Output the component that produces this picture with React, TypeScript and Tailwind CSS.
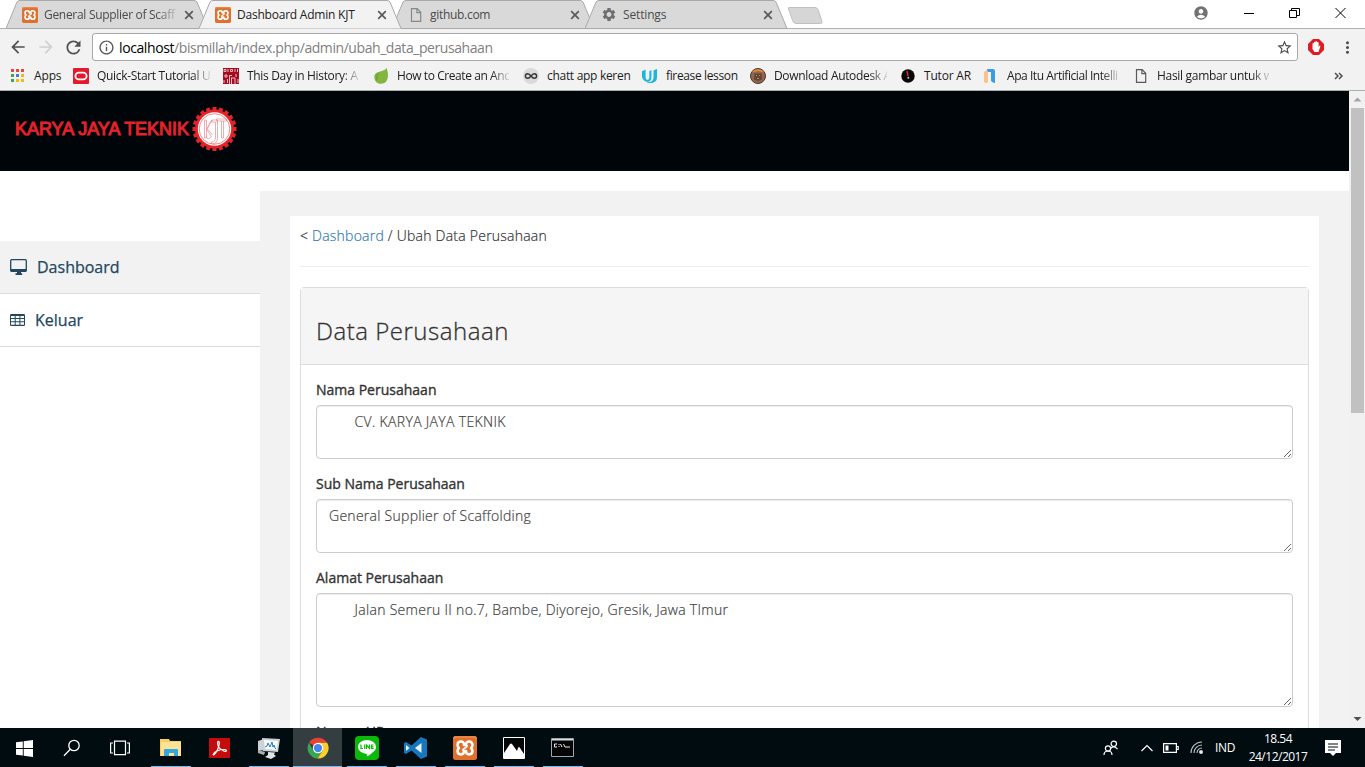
import React from "react";
import { MdSettings, MdAccountCircle, MdStarBorder, MdMoreVert, MdArrowBack, MdArrowForward, MdRefresh, MdInfoOutline } from "react-icons/md";

function XamppIcon({ size = 16 }: { size?: number }) {
  return (
    <svg width={size} height={size} viewBox="0 0 24 24" className="shrink-0">
      <rect width="24" height="24" rx="2.5" fill="#e0702c" />
      <path d="M1 3V1h22v2" fill="none" stroke="#f19a5e" strokeWidth="1" />
      <path d="M8 5.600C5.500 5.600 4.500 7.300 4.500 9c0 1.300.6 2.300 1.500 3-.9.7-1.500 1.700-1.500 3 0 1.700 1 3.400 3.500 3.400 2.200 0 3-1.400 3-3.400h2c0 2 .8 3.400 3 3.400 2.500 0 3.500-1.700 3.500-3.400 0-1.300-.6-2.300-1.500-3 .9-.7 1.500-1.700 1.500-3 0-1.700-1-3.400-3.500-3.400-2.200 0-3 1.400-3 3.400h-2c0-2-.8-3.400-3-3.400Z" fill="none" stroke="#fff" strokeWidth="2.500" strokeLinejoin="round" />
      <path d="M14 9v1.500L10 13.500V15" fill="none" stroke="#fff" strokeWidth="1.600" />
    </svg>
  );
}

function PageIcon({ color = "#5a5a5a" }: { color?: string }) {
  return (
    <svg width="16" height="16" viewBox="0 0 16 16" className="shrink-0" fill="none" stroke={color} strokeWidth="1.2">
      <path d="M3.500 1.600h5.700l3.500 3.700v9.100H3.500zM8.900 1.600v4h3.800" />
    </svg>
  );
}

function LineIcon() {
  return (
    <svg width="24" height="24" viewBox="0 0 24 24">
      <rect width="24" height="24" rx="4" fill="#08b908" />
      <path d="M12 4c5 0 9 3 9 7 0 3-2 4.500-4 6-2 1.600-4.500 3.500-5 3.300-.6-.2.500-2.300-.5-2.500C6.500 17.200 3 14.500 3 11c0-4 4-7 9-7Z" fill="#fff" />
      <path d="M6 8.500v4h2M9.700 8.500v4.500M11.500 13V9l3 3.500v-4M18.500 9h-2v3.500h2M16.500 10.800h2" fill="none" stroke="#08b908" strokeWidth="1.200" />
    </svg>
  );
}

type TabProps = { title: string; icon: React.ReactNode; active?: boolean; titleClass: string };

function Tab({ title, icon, active, titleClass }: TabProps) {
  return (
    <div className={active ? "relative z-10 -mr-[13px] h-[29px] w-[206px] shrink-0" : "relative -mr-[13px] h-[29px] w-[206px] shrink-0"}>
      <svg className="absolute inset-0" width="206" height="29" viewBox="0 0 206 29">
        <path d="M0 28.500 11 2Q12 .5 14 .5H188Q190 .5 191 2L202 28.500" fill={active ? "#f2f2f2" : "#d9d9d9"} stroke="#a9a9a9" />
        {!active && <path d="M0 28.500H203" stroke="#a9a9a9" />}
      </svg>
      <div className="relative flex h-[29px] items-center pl-4">
        <span className="flex w-4 shrink-0">{icon}</span>
        <span className={"ml-1.5 w-[133px] whitespace-nowrap text-[12px] " + titleClass}>{title}</span>
        <svg width="10" height="10" viewBox="0 0 10 10" className="ml-[7px] shrink-0"><path d="m1.200 1.200 7.600 7.600m0-7.600L1.200 8.800" stroke="#5a5a5a" strokeWidth="1.700" /></svg>
      </div>
    </div>
  );
}

const fade = "[mask-image:linear-gradient(to_right,black_84%,rgba(0,0,0,0.15))]";

function Bookmark({ icon, text, className, textClass = "" }: { icon: React.ReactNode; text: string; className: string; textClass?: string }) {
  return (
    <div className={"flex shrink-0 items-center " + className}>
      <span className="mr-2 flex w-4 shrink-0">{icon}</span>
      <span className={"whitespace-nowrap " + textClass}>{text}</span>
    </div>
  );
}

function AppsIcon() {
  const c = ["#e04a3f", "#e04a3f", "#e04a3f", "#3aa757", "#3f7de0", "#f2b90f", "#3aa757", "#f2b90f", "#f2b90f"];
  return <svg width="14" height="14" viewBox="0 0 14 14" className="ml-px">{c.map((f, i) => <rect key={i} x={(i % 3) * 5} y={Math.floor(i / 3) * 5} width="3" height="3" fill={f} />)}</svg>;
}

function Bookmarks() {
  return (
    <div className="flex h-[28px] items-center pl-[10px] text-[12px] text-[#1c1c1c]">
      <Bookmark className="w-[63px]" text="Apps" textClass="tracking-[-0.15px]" icon={<AppsIcon />} />
      <Bookmark className="w-[150px]" text="Quick-Start Tutorial U" textClass={"w-[113px] tracking-[-0.32px] " + fade} icon={
        <svg width="16" height="16" viewBox="0 0 16 16"><rect width="16" height="16" rx="1" fill="#e3192c" /><rect x="2.400" y="4.600" width="11.200" height="6.800" rx="3.400" fill="none" stroke="#fff" strokeWidth="1.800" /></svg>} />
      <Bookmark className="w-[150px]" text="This Day in History: A" textClass={"w-[112px] tracking-[-0.32px] " + fade} icon={
        <svg width="16" height="16" viewBox="0 0 16 16"><rect width="16" height="16" fill="#a30b20" /><path d="M1 1.500h2v2H1zM5 1v3M7.500 1.500h2v2h-2zM12 1v3M14.500 1v3M2 7h2v2H2zM6.500 16V7.500H9M13 6v3M1 12v3M4.500 11v4M8.500 10v6M8 10h4M12 10v6M15 11v4" stroke="#efbcc0" fill="none" /></svg>} />
      <Bookmark className="w-[150px]" text="How to Create an And" textClass={"w-[112px] tracking-[-0.42px] " + fade} icon={
        <svg width="16" height="16" viewBox="0 0 16 16"><path d="M13.500 0C16 6 15.500 13.500 10.700 15.300 5.500 17 1.500 14 1.300 9.500 1.100 5 5 4 9.500 2.800Q12.500 1.900 13.500 0Z" fill="#82b541" /><path d="M4 13.500C1.800 9 4 6 6 4.500 4.500 8 4.500 11 4 13.500" fill="#6da32f" /></svg>} />
      <Bookmark className="w-[119px]" text="chatt app keren" textClass="tracking-[-0.3px]" icon={
        <svg width="16" height="16" viewBox="0 0 16 16"><circle cx="8" cy="8" r="8" fill="#dadada" /><path d="M8 8C6.500 6 5.600 5.700 4.700 5.700a2.300 2.300 0 0 0 0 4.600C5.600 10.300 6.500 10 8 8s2.400-2.300 3.300-2.300a2.300 2.300 0 0 1 0 4.600C10.400 10.300 9.500 10 8 8Z" fill="none" stroke="#333" strokeWidth="1.400" /></svg>} />
      <Bookmark className="w-[108px]" text="firease lesson" textClass="tracking-[-0.36px]" icon={
        <svg width="17" height="16" viewBox="0 0 17 16"><path d="M0 3 3.800 1v8q0 3 2 3t2-3V3L10 1.500V9q0 5-4.200 5T0 9Z" fill="#1cb4d9" /><path d="M12.300 2 16 .5V9q0 6.500-7.500 6.500-3 0-4-1.500 7.800 1.500 7.800-5Z" fill="#1cb4d9" /></svg>} />
      <Bookmark className="w-[150px]" text="Download Autodesk A" textClass={"w-[113px] tracking-[-0.34px] " + fade} icon={
        <svg width="16" height="16" viewBox="0 0 16 16"><circle cx="8" cy="8" r="7.500" fill="#90664e" stroke="#4e382f" /><path d="M2 4.500C4 0 12 0 14 4.500L8 3Z" fill="#e5873c" /><path d="M4.500 5.500h7l.5 6-4 1.500-4-1.500z" fill="#654434" /><path d="M6 7.500h1m2 0h1m-3 3h2" stroke="#b98967" /></svg>} />
      <Bookmark className="w-[83px]" text="Tutor AR" textClass="tracking-[-0.2px]" icon={
        <svg width="16" height="16" viewBox="0 0 16 16"><circle cx="8" cy="8" r="6.700" fill="#080808" /><path d="m7 3 1 5" stroke="#e12b35" strokeWidth="1.400" /><circle cx="8.300" cy="9.700" r="1" fill="#e6b6b6" /></svg>} />
      <Bookmark className="w-[150px]" text="Apa Itu Artificial Intelli" textClass={"w-[112px] tracking-[-0.44px] " + fade} icon={
        <svg width="16" height="16" viewBox="0 0 16 16"><path d="M1 4 5 1v13q-2 2-4 0Z" fill="#fac18c" /><path d="M4 1h6q2 0 2 2v12q-2 0-4-2V4H5Z" fill="#3c9be8" /></svg>} />
      <Bookmark className="w-[150px]" text="Hasil gambar untuk w" textClass={"w-[112px] tracking-[-0.3px] " + fade} icon={<PageIcon />} />
      <svg width="10" height="8" viewBox="0 0 10 8" className="ml-[51px]" fill="none" stroke="#505050" strokeWidth="1.500"><path d="m1 1 3 3-3 3m4-6 3 3-3 3" /></svg>
    </div>
  );
}

function BrowserChrome() {
  return (
    <header className="h-[91px] shrink-0 border-b border-[#a9b0ae] bg-[#f2f2f2] font-['Open_Sans',sans-serif]">
      <div className="flex h-[29px] border-b border-[#b0b0b0] bg-white pl-[6px]">
        <Tab title="General Supplier of Scaff" titleClass={"text-[#4b4b4b] tracking-[-0.3px] " + fade} icon={<XamppIcon />} />
        <Tab title="Dashboard Admin KJT" titleClass="text-[#222] tracking-[-0.22px]" active icon={<XamppIcon />} />
        <Tab title="github.com" titleClass="text-[#4b4b4b] tracking-[-0.3px]" icon={<PageIcon color="#888" />} />
        <Tab title="Settings" titleClass="text-[#4b4b4b] tracking-[-0.15px]" icon={<MdSettings size={17} color="#6e6e6e" />} />
        <svg width="36" height="20" viewBox="0 0 36 20" className="ml-[10px] mt-[6px]"><path d="M1 1.500h26q2 0 3 2l4 12q.6 2-1.500 2H8q-2 0-3-2L.5 3q-.5-1.500.5-1.500Z" fill="#d6d6d6" stroke="#c0c0c0" /></svg>
        <div className="ml-auto flex items-start pr-[19px] pt-[5px]">
          <MdAccountCircle size={16} color="#717171" />
          <svg width="10" height="16" viewBox="0 0 10 16" className="ml-[35px]"><path d="M0 8.500h10" stroke="#000" /></svg>
          <svg width="11" height="16" viewBox="0 0 11 16" className="ml-[35px]" fill="none" stroke="#000"><path d="M.5 5.500h7v7h-7zM2.500 5.500v-2h8v7h-3" /></svg>
          <svg width="11" height="16" viewBox="0 0 11 16" className="ml-[35px]"><path d="m.5 3 10 10m0-10-10 10" stroke="#000" /></svg>
        </div>
      </div>
      <div className="flex h-[33px] items-center pt-[3px]">
        <MdArrowBack size={20} color="#505050" className="ml-[8px]" />
        <MdArrowForward size={20} color="#d0d0d0" className="ml-[8px]" />
        <MdRefresh size={21} color="#505050" className="ml-[7px]" />
        <div className="ml-[8px] flex h-[28px] w-[1206px] items-center rounded-[3px] border border-[#a9a9a9] bg-white pl-[5px] text-[14px] text-[#808080]">
          <MdInfoOutline size={17} color="#5a5a5a" className="mr-[4px]" />
          <span className="tracking-[-0.4px] text-black">localhost</span><span className="tracking-[-0.43px]">/bismillah/index.php/admin/ubah_data_perusahaan</span>
          <MdStarBorder size={17} color="#4f4f4f" className="ml-auto mr-[4px]" />
        </div>
        <svg width="16" height="16" viewBox="0 0 16 16" className="ml-[10px]"><path d="M5 0h6l5 5v6l-5 5H5l-5-5V5Z" fill="#dc1d22" /><path d="M4.500 4.500q.6-.8 1.400 0V3.300q.7-1 1.500 0v-.8q.8-1 1.600 0v.8q.9-.8 1.600.2V8l1-1.500q1-.2.700 1L10.500 13h-4l-2-3Z" fill="#fff" /></svg>
        <MdMoreVert size={19} color="#505050" className="ml-[14px]" />
      </div>
      <Bookmarks />
    </header>
  );
}

function CompanyLogo() {
  const teeth = Array.from({ length: 20 }, (_, i) => i * 18);
  return (
    <svg width="224" height="48" viewBox="0 0 224 48">
      <text x="0" y="30" textLength="174" lengthAdjust="spacingAndGlyphs" fill="#e42329" stroke="#e42329" strokeWidth="1" fontFamily="Liberation Sans, sans-serif" fontSize="18.500">KARYA JAYA TEKNIK</text>
      <g transform="translate(199.500 24)">
        {teeth.map((a) => <rect key={a} x="-2" y="-22" width="4" height="5" fill="#e42329" transform={`rotate(${a})`} />)}
        <circle r="19.500" fill="#e42329" /><circle r="16.700" fill="#fff" />
        <circle r="15.300" fill="none" stroke="#ef6c70" strokeWidth=".8" />
        <path d="M-10-9V9h2V-9ZM-2-9l-6 9 5 8q-3 3-5 1M-4-8l-3 8 5 6M-3-9h6v18q0 6-6 6v-2q4 0 4-5V-7h-4ZM2-10h10v2H2ZM7-8V9h2V-8" fill="none" stroke="#e98a8e" strokeWidth=".7" />
      </g>
    </svg>
  );
}

function Sidebar() {
  return (
    <aside className="w-[260px] shrink-0 pt-[50px] text-[16px] text-[#23475f] [-webkit-text-stroke:0.25px_#23475f]">
      <div className="flex h-[53px] items-center border-b border-[#ddd] bg-[#f2f2f2] pl-[10px]">
        <svg width="17" height="16" viewBox="0 0 17 16"><path d="M1.700.7h13.600q1 0 1 1v9.600q0 1-1 1H1.700q-1 0-1-1V1.700q0-1 1-1Z" fill="none" stroke="currentColor" strokeWidth="1.300" /><path d="M.7 10h15.600v2.500H11v1.800h1.200V16H5.500v-1.700H7v-1.800H.7Z" fill="currentColor" /></svg>
        <span className="ml-[10px]">Dashboard</span>
      </div>
      <div className="flex h-[53px] items-center border-b border-[#ddd] pl-[10px]">
        <svg width="15" height="12" viewBox="0 0 15 12"><rect width="15" height="12" rx="1.300" fill="currentColor" /><path d="M1 2h3.700v2H1zm4.700 0h3.700v2H5.700zm4.700 0H14v2h-3.600zM1 5h3.700v2.200H1zm4.700 0h3.700v2.200H5.700zm4.700 0H14v2.200h-3.600zM1 8.200h3.700v2.600H1zm4.700 0h3.700v2.600H5.700zm4.700 0H14v2.600h-3.600z" fill="white" /></svg>
        <span className="ml-[10px]">Keluar</span>
      </div>
    </aside>
  );
}

const fields = [
  { label: "Nama Perusahaan", value: "CV. KARYA JAYA TEKNIK", style: "h-[54px] indent-[25.500px] tracking-[0.330px]" },
  { label: "Sub Nama Perusahaan", value: "General Supplier of Scaffolding", style: "h-[54px] tracking-[0.270px]" },
  { label: "Alamat Perusahaan", value: "Jalan Semeru II no.7, Bambe, Diyorejo, Gresik, Jawa TImur", style: "h-[114px] indent-[25.500px] tracking-[0.300px]" },
  { label: "Nomor HP", value: "", style: "h-[54px]" },
];

function AdminPage() {
  return (
    <div className="flex min-h-0 flex-1 bg-white">
      <div className="flex min-w-0 flex-1 flex-col overflow-hidden font-['Open_Sans',sans-serif] text-[#333]">
        <div className="h-[80px] shrink-0 bg-[#000509] pl-[15px] pt-[14px]"><CompanyLogo /></div>
        <div className="flex min-h-0 flex-1 pt-[20px]">
          <Sidebar />
          <main className="min-w-0 flex-1 overflow-hidden bg-[#f2f2f2] px-[30px] pt-[25px]">
            <div className="bg-white px-[10px] pt-[10px] text-[14px]">
              <div className="h-[41px] border-b border-[#eee] font-light leading-[20px] tracking-[0.230px] [-webkit-text-stroke:0.2px]">&lt; <a className="text-[#337ab7]">Dashboard</a> / Ubah Data Perusahaan</div>
              <section className="mt-[20px] rounded-t border border-[#ddd]">
                <h3 className="h-[77px] border-b border-[#ddd] bg-[#f5f5f5] pl-[15px] pt-[30px] text-[24px] font-light leading-[26px] tracking-[0.520px] [-webkit-text-stroke:0.3px]">Data Perusahaan</h3>
                <div className="p-[15px]">
                  {fields.map((f) => (
                    <div key={f.label} className="mb-[15px]">
                      <label className="mb-[5px] block leading-[20px] [-webkit-text-stroke:0.35px_#333]">{f.label}</label>
                      <textarea readOnly defaultValue={f.value} className={"block w-full resize overflow-auto rounded border border-[#ccc] bg-white px-[12px] py-[6px] font-light leading-[20px] text-[#444] shadow-[inset_0_1px_1px_rgba(0,0,0,.075)] [-webkit-text-stroke:0.2px] " + f.style} />
                    </div>
                  ))}
                </div>
              </section>
            </div>
          </main>
        </div>
      </div>
      <div className="flex w-[16px] shrink-0 flex-col items-center bg-[#f1f1f1]">
        <svg width="16" height="17" viewBox="0 0 16 17"><path d="m4.500 10.500 4-4 4 4Z" fill="#a3a3a3" /></svg>
        <div className="ml-px h-[305px] w-[13px] bg-[#c1c1c1]" />
        <svg width="16" height="17" viewBox="0 0 16 17" className="mt-auto"><path d="m4.500 6 4 4 4-4Z" fill="#505050" /></svg>
      </div>
    </div>
  );
}

function TaskSlot({ children, running, active }: { children: React.ReactNode; running?: boolean; active?: boolean }) {
  return (
    <div className={"flex h-[39px] w-[49px] shrink-0 flex-col items-center " + (active ? "bg-[#343d40]" : "")}>
      <div className="flex h-[38px] items-center justify-center pt-[1px]">{children}</div>
      {running && <div className={active ? "h-px w-full bg-[#76b9ed]" : "h-px w-[40px] bg-[#76b9ed]"} />}
    </div>
  );
}

function Taskbar() {
  return (
    <footer className="flex h-[39px] shrink-0 items-center bg-[#010c10] font-['Open_Sans',sans-serif] text-white">
      <svg width="17" height="17" viewBox="0 0 17 17" className="ml-[16px] mt-[1px]"><path d="M0 2.300 6.800 1.400v6.700H0zm7.700-1L17 0v8.100H7.700zM0 9h6.800v6.600L0 14.700zm7.700 0H17v8l-9.300-1.300z" fill="#fff" /></svg>
      <svg width="18" height="18" viewBox="0 0 18 18" className="ml-[30px]" fill="none" stroke="#fff" strokeWidth="1.300"><circle cx="11" cy="6.500" r="5.200" /><path d="M7.300 10.200 1 16.800" /></svg>
      <svg width="20" height="16" viewBox="0 0 20 16" className="ml-[29px]" fill="none" stroke="#fff" strokeWidth="1.200"><path d="M4.500 1.200h11v13.500h-11zM3 3H.6v10H3M17 3h2.400v10H17" /></svg>
      <div className="ml-[16px] flex">
        <TaskSlot running><svg width="22" height="20" viewBox="0 0 22 20"><path d="M0 1h9l1 2h11v15H0z" fill="#f6cf65" /><path d="M1 4h20v14H1z" fill="#ffe394" /><path d="M4 18v-6q0-1 1-1h12q1 0 1 1v6h-4v-3H9v3z" fill="#31a8df" /></svg></TaskSlot>
        <TaskSlot><svg width="21" height="20" viewBox="0 0 21 20"><path d="M0 0h21v20H0z" fill="#c50b0b" /><path d="M4.200 16.500c1-3 6-5 11-5 4 0 2 3-1 1.300C10 10.500 8 7 8.700 4c.6-1.300 1.800-.5 1.600 1.400C10 9 7.500 15 5 16.700q-1 .6-.8-.2Z" fill="none" stroke="#fff" strokeWidth="1.200" /></svg></TaskSlot>
        <TaskSlot running><svg width="24" height="22" viewBox="0 0 24 22"><path d="m1 4 6-2v11l-6 1z" fill="#ced3d6" /><path d="m5 1 18 1-2 13-15-1z" fill="#cbd2d6" /><path d="m7 3 14 1-1.500 9L8 12z" fill="#f8fcff" /><path d="m8 10 2-1 1-3 2 4 2-5 1 5 1-2 1 3 1 1" fill="none" stroke="#237cc0" strokeWidth="1" /><path d="m11 15 7 .5-1 2 2 1.500-5 3-6-2 3-2z" fill="#dfe4e7" /><path d="m1 13 7 2-1 3-6-2z" fill="#a9b1b5" /></svg></TaskSlot>
        <TaskSlot running active><svg width="22" height="22" viewBox="0 0 48 48"><path d="M24 24 4.500 12.700A23 23 0 0 1 43.800 12.500H24Z" fill="#e84234" /><path d="M14 30 4.300 12.500A23 23 0 0 0 23 47l11-17Z" fill="#36a853" /><path d="M24 12.500h20A23 23 0 0 1 23 47l11-17Z" fill="#fdce2b" /><circle cx="24" cy="24" r="11.500" fill="#fff" /><circle cx="24" cy="24" r="9" fill="#4687ec" /></svg></TaskSlot>
        <TaskSlot running><LineIcon /></TaskSlot>
        <TaskSlot running><svg width="24" height="22" viewBox="0 0 24 22"><path d="m17 0 6 2.500v17L17 22 7.500 13.500 2 17l-2-1V6l2-1 5.500 3.500Z" fill="#1677bd" /><path d="m17.500 6-6.500 5 6.500 5ZM2 8v6l3.500-3Z" fill="#e9f3f8" /></svg></TaskSlot>
        <TaskSlot running><XamppIcon size={24} /></TaskSlot>
        <TaskSlot running><svg width="22" height="22" viewBox="0 0 22 22"><path d="M.5.5h21v21H.5z" fill="#020607" stroke="#fff" /><path d="m1 16 6-9q1-1 2 0l5 7 1-3q1-2 2 0l4 6v5H1Z" fill="#fff" /></svg></TaskSlot>
        <TaskSlot running><svg width="23" height="19" viewBox="0 0 23 19"><path d="M.5.5h22v18H.5z" fill="#050505" stroke="#a0a7aa" /><path d="M1 1h21v1.500H1z" fill="#d9dfe1" /><path d="M6 6H3.500v3H6M8 6v1m0 1v1M9.500 6l1.500 3m1.500-3L14 9m0 0h5" fill="none" stroke="#eee" strokeWidth="1" /></svg></TaskSlot>
      </div>
      <div className="ml-auto flex h-full items-center">
        <svg width="16" height="16" viewBox="0 0 16 16" fill="none" stroke="#fff" strokeWidth="1.200"><circle cx="10.800" cy="3.800" r="2.700" /><path d="M7.500 8.500q3.300-3.500 7 .5" /><circle cx="5" cy="8.500" r="2.600" /><path d="M1 15q0-4 4-4t4 4" /></svg>
        <svg width="12" height="8" viewBox="0 0 12 8" className="ml-[22px]" fill="none" stroke="#fff" strokeWidth="1.200"><path d="m.5 7 5.500-5.500L11.500 7" /></svg>
        <svg width="16" height="10" viewBox="0 0 16 10" className="ml-[10px]"><path d="M.6.6h12.800v8.800H.6zM14 3.500h1.200v3H14" fill="none" stroke="#fff" strokeWidth="1.200" /><path d="M2.500 2.500h3v5h-3z" fill="#fff" /></svg>
        <svg width="13" height="13" viewBox="0 0 13 13" className="ml-[11px]" fill="none" stroke="#bcc1c3" strokeWidth="1.100"><path d="M1 12A11 11 0 0 1 12 1M4 12a8 8 0 0 1 8-8M7 12a5 5 0 0 1 5-5" /><circle cx="11" cy="11" r="1.500" fill="#fff" /></svg>
        <span className="ml-[12px] w-[21px] text-[12px] tracking-[-0.3px]">IND</span>
        <div className="ml-[12px] w-[60px] text-center text-[12px] leading-[18px] tracking-[-0.5px]"><div>18.54</div><div>24/12/2017</div></div>
        <svg width="16" height="16" viewBox="0 0 16 16" className="ml-[17px] mr-[24px]"><path d="M0 0h16v13h-5l-3 3-3-3H0Z" fill="#fff" /><path d="M3 4h10M3 7h10M3 10h7" stroke="#010c10" strokeWidth="1" /></svg>
      </div>
    </footer>
  );
}

export default function App() {
  return <div className="flex h-[767px] w-[1365px] flex-col overflow-hidden"><BrowserChrome /><AdminPage /><Taskbar /></div>;
}
